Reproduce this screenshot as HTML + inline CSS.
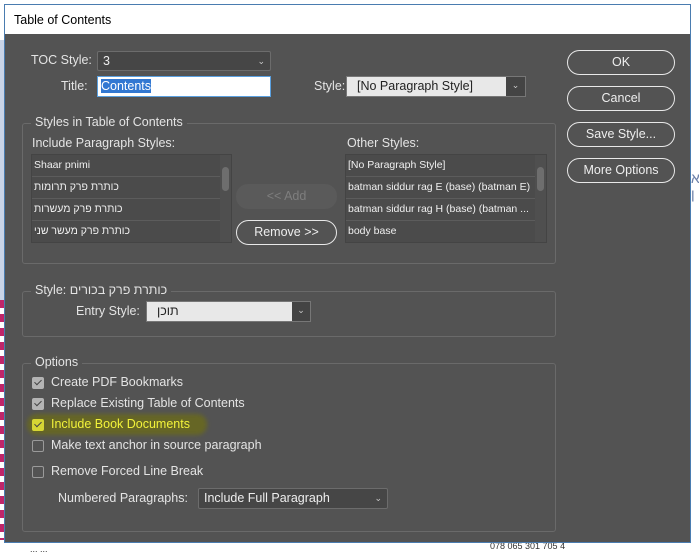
<!DOCTYPE html>
<html><head><meta charset="utf-8"><style>
*{box-sizing:border-box;margin:0;padding:0}
body{width:699px;height:548px;overflow:hidden;background:#fff;position:relative;font-family:"Liberation Sans","DejaVu Sans",sans-serif;font-size:12px;color:#e6e6e6}
.a{position:absolute}
#dlg{position:absolute;left:4px;top:4px;width:687px;height:539px;background:#535353;border:1px solid #4a7cb0}
#tb{position:absolute;left:0;top:0;width:685px;height:29px;background:#fff;color:#000;font-size:12.5px;padding:8px 0 0 9px}
.lbl{position:absolute;font-size:12.5px;color:#e4e4e4;white-space:nowrap}
.grp{position:absolute;border:1px solid #6a6a6a;border-radius:3px}
.gl{position:absolute;background:#535353;padding:0 4px;font-size:12.5px;color:#e4e4e4;white-space:nowrap}
.dd{position:absolute;background:#464646;border:1px solid #6c6c6c;border-radius:2px;font-size:12.5px;padding:2px 5px;color:#eee}
.arrow{position:absolute;right:5px;top:4px;font-size:9px;color:#ccc}
.list{position:absolute;background:#4b4b4b;border:1px solid #444}
.row{height:22px;border-bottom:1px solid #5c5c5c;font-size:10.5px;padding:4px 2px;color:#f0f0f0;white-space:nowrap;overflow:hidden}
.sb{position:absolute;right:0;top:0;width:11px;height:100%;background:#4f4f4f}
.th{position:absolute;left:2px;top:12px;width:7px;height:24px;background:#6e6e6e;border-radius:4px}
.btn{position:absolute;border:1.5px solid #e8e8e8;border-radius:13px;text-align:center;font-size:12.5px;color:#eee;line-height:22px}
.cb{position:absolute;width:12px;height:12px;border:1px solid #9a9a9a;border-radius:2px}
.cb.on{background:#b4b4b4;border-color:#b4b4b4}
.cb.on:after{content:"";position:absolute;left:3px;top:0px;width:3px;height:6px;border:solid #444;border-width:0 1.5px 1.5px 0;transform:rotate(45deg)}
</style></head><body>
<div class="a" style="left:0;top:40px;width:4px;height:500px;background:#c9d3e6"></div>
<div class="a" style="left:0;top:300px;width:4px;height:240px;background:repeating-linear-gradient(#c0266a 0 8px,#fff 8px 14px)"></div>
<div class="a" style="left:30px;top:544px;font-size:9px;color:#333">... ...</div>
<div class="a" style="left:490px;top:541px;font-size:9px;color:#333">078 065 301 705 4</div>
<div class="a" style="left:691px;top:170px;font-size:14px;color:#6b7fa8">א<br>ן</div>
<div id="dlg">
<div id="tb">Table of Contents</div>
<div class="lbl" style="left:26px;top:48px">TOC Style:</div>
<div class="dd" style="left:92px;top:46px;width:174px;height:20px">3<span class="arrow">&#8964;</span></div>
<div class="lbl" style="left:56px;top:74px">Title:</div>
<div class="a" style="left:92px;top:71px;width:174px;height:21px;background:#fff;border:1px solid #5aa0e0;padding:2px 3px"><span style="background:#3278d2;color:#fff;font-size:12.5px">Contents</span></div>
<div class="lbl" style="left:309px;top:74px">Style:</div>
<div class="a" style="left:341px;top:71px;width:180px;height:21px;background:#e8e8e8;border:1px solid #777;color:#222;font-size:12.5px;padding:2px 10px">[No Paragraph Style]<div style="position:absolute;right:0;top:0;width:19px;height:19px;background:#444;color:#ccc;font-size:9px;text-align:center;line-height:16px">&#8964;</div></div>

<div class="grp" style="left:17px;top:118px;width:534px;height:141px"></div>
<div class="gl" style="left:26px;top:110px">Styles in Table of Contents</div>
<div class="lbl" style="left:27px;top:131px">Include Paragraph Styles:</div>
<div class="list" style="left:26px;top:149px;width:201px;height:89px">
<div class="row">Shaar pnimi</div><div class="row">כותרת פרק תרומות</div><div class="row">כותרת פרק מעשרות</div><div class="row" style="border:0">כותרת פרק מעשר שני</div>
<div class="sb"><div class="th"></div></div></div>
<div class="a" style="left:231px;top:179px;width:101px;height:25px;background:#5a5a5a;border-radius:12px;text-align:center;line-height:25px;font-size:12.5px;color:#7e7e7e">&lt;&lt; Add</div>
<div class="btn" style="left:231px;top:215px;width:101px;height:25px">Remove &gt;&gt;</div>
<div class="lbl" style="left:342px;top:131px">Other Styles:</div>
<div class="list" style="left:340px;top:149px;width:202px;height:89px">
<div class="row">[No Paragraph Style]</div><div class="row">batman siddur rag E (base) (batman E)</div><div class="row">batman siddur rag H (base) (batman ...</div><div class="row" style="border:0">body base</div>
<div class="sb"><div class="th" style="top:12px"></div></div></div>

<div class="grp" style="left:17px;top:286px;width:534px;height:46px"></div>
<div class="gl" style="left:26px;top:278px">Style: <span>כותרת פרק בכורים</span></div>
<div class="lbl" style="left:71px;top:299px">Entry Style:</div>
<div class="a" style="left:141px;top:296px;width:165px;height:21px;background:#e8e8e8;border:1px solid #777;color:#222;font-size:12.5px;padding:2px 10px">תוכן<div style="position:absolute;right:0;top:0;width:18px;height:19px;background:#444;color:#ccc;font-size:9px;text-align:center;line-height:16px">&#8964;</div></div>

<div class="grp" style="left:17px;top:358px;width:534px;height:169px"></div>
<div class="gl" style="left:26px;top:350px">Options</div>
<div class="cb on" style="left:27px;top:372px"></div><div class="lbl" style="left:46px;top:370px">Create PDF Bookmarks</div>
<div class="cb on" style="left:27px;top:393px"></div><div class="lbl" style="left:46px;top:391px">Replace Existing Table of Contents</div>
<div class="a" style="left:22px;top:409px;width:180px;height:21px;background:#6b6b1a;border-radius:10px;filter:blur(2px);opacity:.8"></div>
<div class="cb on" style="left:27px;top:414px;background:#d6d634;border-color:#d6d634"></div><div class="lbl" style="left:46px;top:412px;color:#f2f23a">Include Book Documents</div>
<div class="cb" style="left:27px;top:435px"></div><div class="lbl" style="left:46px;top:433px">Make text anchor in source paragraph</div>
<div class="cb" style="left:27px;top:461px"></div><div class="lbl" style="left:46px;top:459px">Remove Forced Line Break</div>
<div class="lbl" style="left:53px;top:486px">Numbered Paragraphs:</div>
<div class="dd" style="left:193px;top:483px;width:190px;height:21px">Include Full Paragraph<span class="arrow">&#8964;</span></div>

<div class="btn" style="left:562px;top:45px;width:108px;height:25px">OK</div>
<div class="btn" style="left:562px;top:81px;width:108px;height:25px">Cancel</div>
<div class="btn" style="left:562px;top:117px;width:108px;height:25px">Save Style...</div>
<div class="btn" style="left:562px;top:153px;width:108px;height:25px">More Options</div>
</div>
</body></html>
